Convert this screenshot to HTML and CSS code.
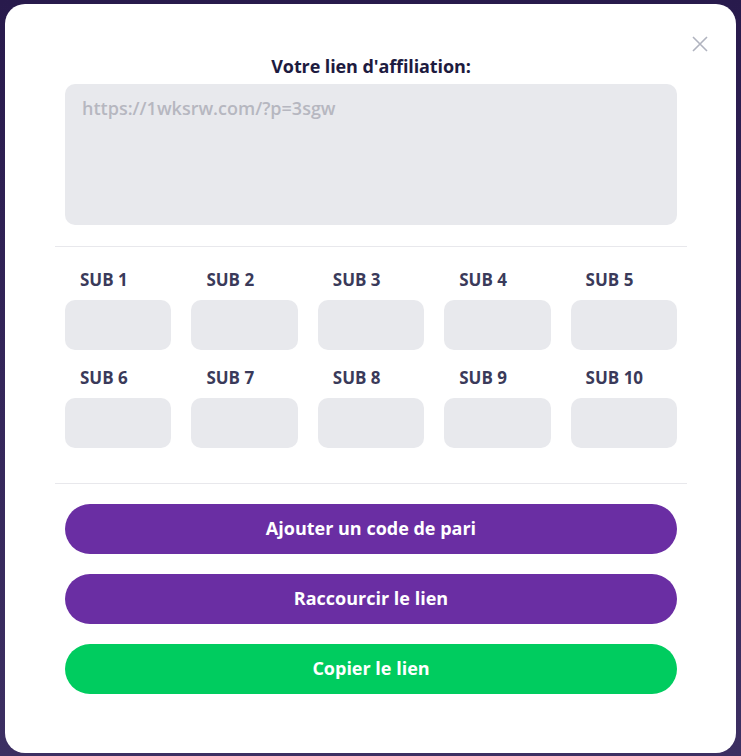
FILE: index.html
```html
<!DOCTYPE html>
<html lang="fr">
<head>
<meta charset="utf-8">
<link rel="stylesheet" href="styles.css">
</head>
<body>
<div class="modal">
  <button class="close" aria-label="Fermer">
    <svg width="16" height="16" viewBox="0 0 16 16"><path d="M1 1L15 15M15 1L1 15" stroke="#b0b3bf" stroke-width="1.6" fill="none"/></svg>
  </button>
  <div class="section">
    <h2 class="title">Votre lien d'affiliation:</h2>
    <div class="link-box">https://1wksrw.com/?p=3sgw</div>
  </div>
  <hr class="divider divider-top">
  <div class="subs">
    <div class="sub"><div class="sub-label">SUB 1</div><div class="sub-input"></div></div>
    <div class="sub"><div class="sub-label">SUB 2</div><div class="sub-input"></div></div>
    <div class="sub"><div class="sub-label">SUB 3</div><div class="sub-input"></div></div>
    <div class="sub"><div class="sub-label">SUB 4</div><div class="sub-input"></div></div>
    <div class="sub"><div class="sub-label">SUB 5</div><div class="sub-input"></div></div>
    <div class="sub"><div class="sub-label">SUB 6</div><div class="sub-input"></div></div>
    <div class="sub"><div class="sub-label">SUB 7</div><div class="sub-input"></div></div>
    <div class="sub"><div class="sub-label">SUB 8</div><div class="sub-input"></div></div>
    <div class="sub"><div class="sub-label">SUB 9</div><div class="sub-input"></div></div>
    <div class="sub"><div class="sub-label">SUB 10</div><div class="sub-input"></div></div>
  </div>
  <hr class="divider divider-bottom">
  <div class="actions">
    <button class="btn btn-purple">Ajouter un code de pari</button>
    <button class="btn btn-purple">Raccourcir le lien</button>
    <button class="btn btn-green">Copier le lien</button>
  </div>
</div>
</body>
</html>
```
FILE: styles.css
```css
* { box-sizing: border-box; }
html, body { height: 100%; }
body {
  margin: 0;
  background: linear-gradient(180deg, #281a4c 0%, #34265a 50%, #3c2f62 100%);
  font-family: "Open Sans", Lato, sans-serif;
  padding: 4px 5px 3px 5px;
}
.modal {
  position: relative;
  background: #ffffff;
  border-radius: 20px;
  height: 749px;
  padding: 52px 49px 0 50px;
}
.close {
  position: absolute;
  top: 32px;
  right: 28px;
  border: 0;
  background: none;
  padding: 0;
  width: 16px;
  height: 16px;
  cursor: pointer;
}
.close svg { display: block; }
.section { padding: 0 10px; }
.title {
  margin: 0 0 8px;
  text-align: center;
  font-size: 18px;
  line-height: 20px;
  font-weight: 700;
  color: #1d1b3f;
  letter-spacing: -0.1px;
}
.link-box {
  height: 141px;
  background: #e8e9ed;
  border-radius: 10px;
  padding: 13px 17px;
  font-size: 18px;
  line-height: 22px;
  font-weight: 600;
  color: #b6b7c0;
}
.divider {
  border: 0;
  height: 1px;
  background: #e8e8ec;
  margin: 0;
}
.divider-top { margin-top: 21px; }
.subs {
  display: grid;
  grid-template-columns: repeat(5, 1fr);
  column-gap: 20px;
  row-gap: 18px;
  padding: 23px 10px 0;
}
.sub-label {
  font-size: 17px;
  line-height: 20px;
  font-weight: 700;
  color: #3a3a5a;
  padding-left: 15px;
  margin-bottom: 10px;
}
.sub-input {
  height: 50px;
  background: #e8e9ed;
  border-radius: 10px;
}
.divider-bottom { margin-top: 35px; }
.actions {
  display: flex;
  flex-direction: column;
  gap: 20px;
  padding: 20px 10px 0;
}
.btn {
  height: 50px;
  border: 0;
  border-radius: 25px;
  font-family: "Open Sans", Lato, sans-serif;
  font-size: 18px;
  font-weight: 700;
  color: #ffffff;
  cursor: pointer;
  padding: 0 0 2px;
}
.btn-purple { background: #6a2ea3; }
.btn-green { background: #00cc5f; }
```
